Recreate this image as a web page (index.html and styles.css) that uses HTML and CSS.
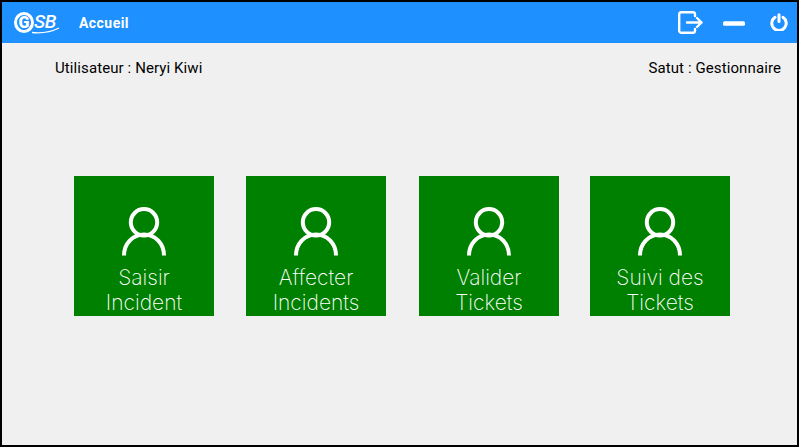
FILE: index.html
```html
<!DOCTYPE html>
<html lang="fr">
<head>
<meta charset="utf-8">
<title>Accueil</title>
<link rel="stylesheet" href="styles.css">
</head>
<body>
<div class="window">
  <header class="bar">
    <div class="logo">
      <span class="logo-g">G</span><span class="logo-sb">SB</span>
      <svg class="logo-swoosh" width="28" height="7" viewBox="0 0 28 7"><path d="M0 5.500C10 6.500 19 5 27 1" fill="none" stroke="#fff" stroke-width="1.300"/></svg>
    </div>
    <span class="bar-title">Accueil</span>
    <div class="bar-icons">
      <svg class="ico-exit" width="25" height="23" viewBox="0 0 25 23" fill="none" stroke="#fff" stroke-width="2.400" stroke-linecap="round" stroke-linejoin="round"><path d="M17 5V3A2 2 0 0 0 15 1.200H3A2 2 0 0 0 1.200 3V20A2 2 0 0 0 3 21.800H15A2 2 0 0 0 17 20V18"/><path d="M9 11.500H23.500M19 7L23.500 11.500L19 16"/></svg>
      <svg class="ico-min" width="22" height="5" viewBox="0 0 22 5"><rect width="22" height="4.400" y="0.300" rx="1.500" fill="#fff"/></svg>
      <svg class="ico-power" width="18" height="18" viewBox="0 0 18 18" fill="none" stroke="#fff" stroke-width="3" stroke-linecap="round"><path d="M9 1.700V8.500"/><path d="M5 4.300A7.200 7.200 0 1 0 13 4.300"/></svg>
    </div>
  </header>
  <div class="info">
    <span>Utilisateur : Neryi Kiwi</span>
    <span>Satut : Gestionnaire</span>
  </div>
  <main class="tiles">
    <a class="tile"><svg class="user" width="44" height="49" viewBox="0 0 44 49" fill="none" stroke="#fff" stroke-width="4"><circle cx="22" cy="15.300" r="13.200"/><path d="M2 48.500C2 37 10.500 27.500 22 27.500S42 37 42 48.500"/></svg><span class="tile-label">Saisir<br>Incident</span></a>
    <a class="tile"><svg class="user" width="44" height="49" viewBox="0 0 44 49" fill="none" stroke="#fff" stroke-width="4"><circle cx="22" cy="15.300" r="13.200"/><path d="M2 48.500C2 37 10.500 27.500 22 27.500S42 37 42 48.500"/></svg><span class="tile-label">Affecter<br>Incidents</span></a>
    <a class="tile tile-wide-gap"><svg class="user" width="44" height="49" viewBox="0 0 44 49" fill="none" stroke="#fff" stroke-width="4"><circle cx="22" cy="15.300" r="13.200"/><path d="M2 48.500C2 37 10.500 27.500 22 27.500S42 37 42 48.500"/></svg><span class="tile-label">Valider<br>Tickets</span></a>
    <a class="tile tile-narrow-gap"><svg class="user" width="44" height="49" viewBox="0 0 44 49" fill="none" stroke="#fff" stroke-width="4"><circle cx="22" cy="15.300" r="13.200"/><path d="M2 48.500C2 37 10.500 27.500 22 27.500S42 37 42 48.500"/></svg><span class="tile-label">Suivi des<br>Tickets</span></a>
  </main>
</div>
</body>
</html>
```
FILE: styles.css
```css
* { box-sizing: border-box; }
html, body { margin: 0; padding: 0; }
body { width: 799px; height: 447px; overflow: hidden; }
.window {
  width: 799px;
  height: 447px;
  border: 2px solid #000;
  background: #f0f0f0;
  display: flex;
  flex-direction: column;
}
.bar {
  height: 41px;
  background: #1e90ff;
  display: flex;
  align-items: center;
  padding: 0 9px 0 12px;
  color: #fff;
}
.logo {
  position: relative;
  width: 45px;
  height: 24px;
  display: flex;
  align-items: center;
  color: #fff;
}
.logo-g {
  flex: none;
  width: 20px;
  height: 21px;
  border: 3px solid #fff;
  border-radius: 50%;
  display: flex;
  align-items: center;
  justify-content: center;
  font: 900 16px/1 Roboto, sans-serif;
}
.logo-sb {
  font: italic 500 19px/1 Roboto, sans-serif;
  letter-spacing: -0.3px;
  margin-top: -3px;
}
.logo-swoosh { position: absolute; left: 18px; top: 16px; }
.bar-title {
  margin-left: 20px;
  font: 700 14px/1 Roboto, sans-serif;
  letter-spacing: 0.45px;
}
.bar-icons {
  margin-left: auto;
  display: flex;
  align-items: center;
}
.ico-exit { margin-right: 20px; margin-top: -1px; }
.ico-min { margin-right: 25px; margin-top: 1px; }
.ico-power { margin-top: -2px; }
.info {
  display: flex;
  justify-content: space-between;
  padding: 16px 16px 0 53px;
  font: 400 15px/18px Roboto, sans-serif;
  letter-spacing: 0.1px;
  color: #000;
}
.tiles {
  display: flex;
  gap: 32px;
  padding: 99px 0 0 72px;
}
.tile {
  width: 140px;
  height: 140px;
  background: #008000;
  display: flex;
  flex-direction: column;
  align-items: center;
  padding-top: 31px;
  overflow: hidden;
}
.tile-wide-gap { margin-left: 1px; }
.tile-narrow-gap { margin-left: -1px; }
.user { flex: none; }
.tile-label {
  margin-top: 9px;
  font: 200 21px/25px Inter, sans-serif;
  color: #fff;
  text-align: center;
}
```
